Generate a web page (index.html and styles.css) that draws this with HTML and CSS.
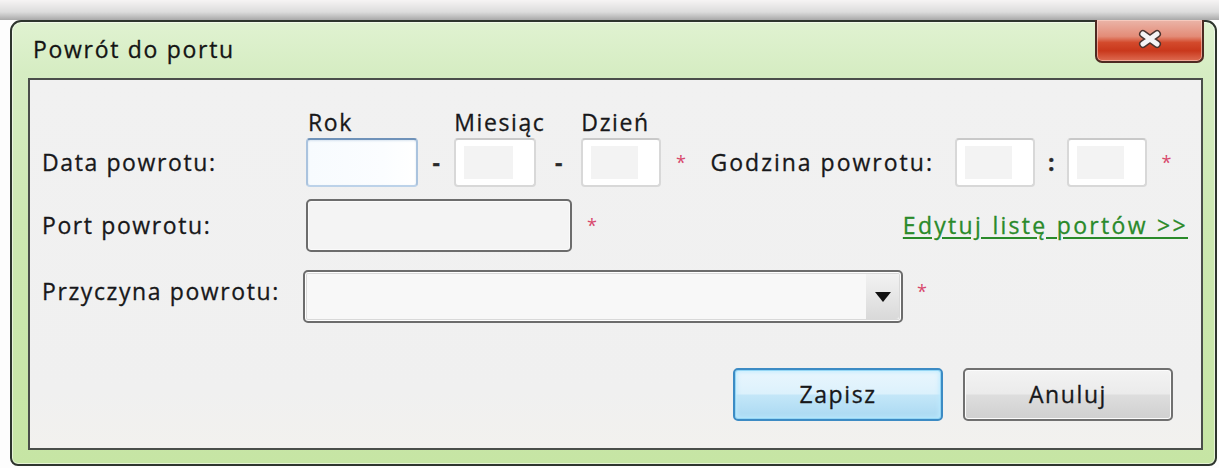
FILE: index.html
```html
<!DOCTYPE html>
<html lang="pl">
<head>
<meta charset="utf-8">
<title>Powrót do portu</title>
<link rel="stylesheet" href="styles.css">
</head>
<body>
<div class="window">
  <div class="titlebar">
    <span class="title">Powrót do portu</span>
    <button class="close" type="button" aria-label="Zamknij">
      <svg width="30" height="20" viewBox="0 0 30 20">
        <path d="M8 5 L22 15 M22 5 L8 15" stroke="#4a3430" stroke-width="8" stroke-linecap="round"/>
        <path d="M8 5 L22 15 M22 5 L8 15" stroke="#f4f4f6" stroke-width="5" stroke-linecap="round"/>
      </svg>
    </button>
  </div>
  <div class="client">
    <div class="row row-date">
      <span class="label">Data powrotu:</span>
      <div class="part part-year">
        <span class="cap">Rok</span>
        <span class="box box-focus"></span>
      </div>
      <span class="sep sep-1">-</span>
      <div class="part part-month">
        <span class="cap">Miesiąc</span>
        <span class="box box-hint"></span>
      </div>
      <span class="sep sep-2">-</span>
      <div class="part part-day">
        <span class="cap">Dzień</span>
        <span class="box box-hint"></span>
      </div>
      <span class="req req-date">*</span>
      <span class="label label-time">Godzina powrotu:</span>
      <span class="box box-hour box-hint"></span>
      <span class="sep sep-colon">:</span>
      <span class="box box-minute box-hint"></span>
      <span class="req req-time">*</span>
    </div>
    <div class="row row-port">
      <span class="label">Port powrotu:</span>
      <span class="field field-port"></span>
      <span class="req req-port">*</span>
      <a class="link" href="#">Edytuj listę portów &gt;&gt;</a>
    </div>
    <div class="row row-reason">
      <span class="label">Przyczyna powrotu:</span>
      <div class="field select">
        <span class="select-arrow">
          <svg width="16" height="10" viewBox="0 0 16 10"><path d="M0 0 H16 L8 10 Z" fill="#111"/></svg>
        </span>
      </div>
      <span class="req req-reason">*</span>
    </div>
    <div class="actions">
      <button class="btn btn-primary" type="button">Zapisz</button>
      <button class="btn" type="button">Anuluj</button>
    </div>
  </div>
</div>
</body>
</html>
```

FILE: styles.css
```css
* {
  box-sizing: border-box;
}

body {
  margin: 0;
  width: 1219px;
  height: 468px;
  overflow: hidden;
  padding-top: 20px;
  background: #fdfdfd linear-gradient(#f6f4f4, #dcdcdc 12px, #a9a9a9 20px) top / 100% 20px no-repeat;
  font-family: "Open Sans", "Noto Sans", sans-serif;
  font-size: 23px;
  letter-spacing: 1.6px;
  color: #18181a;
  -webkit-text-stroke: 0.3px currentColor;
}

/* window frame */
.window {
  margin-left: 10px;
  width: 1207px;
  height: 446px;
  border: 2px solid #2e352e;
  border-radius: 11px 11px 8px 8px;
  background: linear-gradient(#e0f2d1, #d6edc3 50px, #cde8b2 200px, #c6e5a4);
  box-shadow: inset 0 0 0 1px rgba(255, 255, 255, 0.55);
  display: flex;
  flex-direction: column;
}

.titlebar {
  height: 56px;
  display: flex;
  align-items: center;
  padding-left: 21px;
}

.title {
  font-size: 23px;
  letter-spacing: 1.7px;
  color: #141414;
  padding-bottom: 2px;
}

.close {
  align-self: flex-start;
  margin: -2px 11px 0 auto;
  width: 109px;
  height: 43px;
  padding: 0 0 3px;
  border: 2px solid #4e2a22;
  border-top: none;
  border-radius: 0 0 7px 7px;
  background: linear-gradient(#ebb5a8, #e38c78 40%, #d34a2c 55%, #c9381c 75%, #de6c52);
  box-shadow: inset 0 0 0 1px rgba(255, 220, 210, 0.55);
  display: flex;
  align-items: center;
  justify-content: center;
}

/* client area */
.client {
  flex: 1;
  margin: 0 12px 14px 16px;
  border: 2px solid #4a4e4a;
  background: linear-gradient(#f1f1f1, #f0f0f0 85%, #f2f1ee);
  padding: 26px 15px 0 12px;
  display: flex;
  flex-direction: column;
}

.row {
  display: flex;
  align-items: flex-end;
}

.label {
  width: 264px;
  flex: none;
  white-space: nowrap;
}

.row-date .label {
  line-height: 49px;
}

.row-port .label {
  line-height: 53px;
}

.row-reason .label {
  line-height: 53px;
  padding-bottom: 5px;
}

.part {
  display: flex;
  flex-direction: column;
}

.cap {
  line-height: 32px;
  white-space: nowrap;
  width: 0;
  overflow: visible;
}

.part-year .cap {
  padding-left: 2px;
}

.box {
  display: block;
  height: 49px;
  border: 2px solid #d8d8d8;
  border-top-color: #c9c9c9;
  border-radius: 4px;
  background: #fff;
  position: relative;
}

.box-hint::before {
  content: "";
  position: absolute;
  left: 8px;
  top: 6px;
  bottom: 6px;
  width: 62%;
  background: #f3f3f3;
}

.box-focus {
  border-color: #6f92b9 #aac3de #bcd2e9 #aac3de;
  background: linear-gradient(90deg, #f7fbfe, #fbfdff 70%, #ffffff);
  box-shadow: inset 0 1px 2px rgba(120, 160, 200, 0.25);
}

.part-year .box {
  width: 112px;
}

.part-month .box {
  width: 82px;
}

.part-day .box {
  width: 80px;
}

.sep {
  line-height: 49px;
  text-align: center;
  font-weight: 700;
  letter-spacing: 0;
  color: #2a2a2a;
}

.sep-1 {
  width: 37px;
}

.sep-2 {
  width: 46px;
}

.sep-colon {
  width: 33px;
}

.req {
  color: #d8486c;
  font-size: 18px;
  letter-spacing: 0;
  -webkit-text-stroke: 0;
  width: 30px;
  text-align: center;
}

.req-date {
  line-height: 49px;
  width: 40px;
}

.label-time {
  width: 244px;
  margin-left: 10px;
  letter-spacing: 2px;
}

.box-hour {
  width: 82px;
}

.box-minute {
  width: 81px;
}

.req-time {
  line-height: 49px;
  width: 40px;
}

.row-port {
  margin-top: 12px;
}

.field {
  display: block;
  height: 53px;
  border: 2px solid #6c6c6c;
  border-radius: 5px;
  background: #f4f4f4;
  box-shadow: inset 0 0 0 1px #fbfbfb;
}

.field-port {
  width: 266px;
}

.req-port {
  line-height: 53px;
  width: 40px;
}

.req-reason {
  line-height: 53px;
  width: 38px;
  padding-bottom: 5px;
}

.link {
  margin-left: auto;
  margin-right: -2px;
  line-height: 53px;
  color: #2a8a2a;
  text-decoration: underline;
  text-underline-offset: 3px;
  white-space: nowrap;
  letter-spacing: 2.3px;
  word-spacing: 1px;
}

.row-reason {
  margin-top: 13px;
}

.select {
  width: 600px;
  margin-left: -3px;
  background: #f8f8f8;
  box-shadow: inset 0 0 0 1px #ffffff, inset 0 0 0 2px #d9d9d9;
  display: flex;
  justify-content: flex-end;
  padding: 2px;
}

.select-arrow {
  width: 33px;
  border-radius: 0 3px 3px 0;
  background: linear-gradient(#f2f2f2, #e6e6e6 50%, #d9d9d9);
  display: flex;
  align-items: center;
  justify-content: center;
}

/* dialog buttons */
.actions {
  margin-top: 45px;
  display: flex;
  justify-content: flex-end;
  gap: 20px;
  padding-right: 13px;
}

.btn {
  width: 210px;
  height: 53px;
  border: 2px solid #707070;
  border-radius: 5px;
  background: linear-gradient(#f3f3f3, #ebebeb 48%, #dddddd 52%, #d0d0d0);
  box-shadow: inset 0 0 0 1px #fcfcfc;
  font-family: inherit;
  font-size: 23px;
  letter-spacing: 1.6px;
  -webkit-text-stroke: 0.3px currentColor;
  color: #18181a;
  padding: 0 0 2px;
}

.btn-primary {
  border-color: #3c8bc4;
  background: linear-gradient(#eaf6fd, #dcf1fc 48%, #c3e6f8 52%, #a9d9f2);
  box-shadow: inset 0 0 0 1px #94d6f5, inset 0 0 4px 2px rgba(190, 235, 255, 0.9);
}
```
